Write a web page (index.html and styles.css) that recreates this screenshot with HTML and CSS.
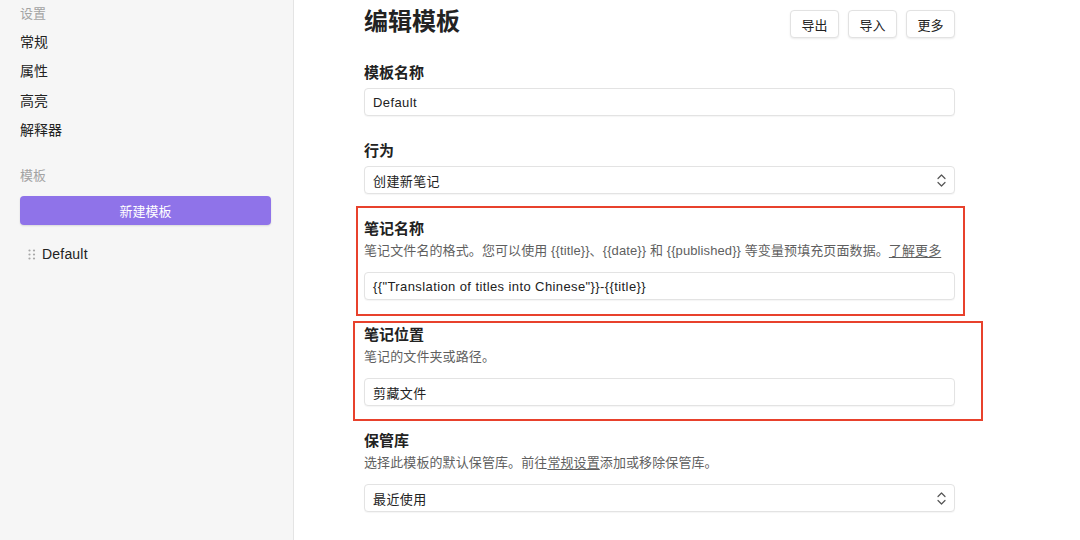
FILE: index.html
```html
<!DOCTYPE html>
<html lang="zh">
<head>
<meta charset="utf-8">
<title>编辑模板</title>
<link rel="stylesheet" href="styles.css">
</head>
<body>
<div class="app">
  <aside class="sidebar">
    <div class="side-head">设置</div>
    <ul class="side-list">
      <li>常规</li>
      <li>属性</li>
      <li>高亮</li>
      <li>解释器</li>
    </ul>
    <div class="side-head side-head-2">模板</div>
    <button class="new-btn">新建模板</button>
    <div class="tpl-item">
      <svg class="grip" width="8" height="11" viewBox="0 0 8 11"><g fill="#a8a8a8"><circle cx="1.5" cy="1.5" r="1.1"/><circle cx="6" cy="1.5" r="1.1"/><circle cx="1.5" cy="5.5" r="1.1"/><circle cx="6" cy="5.5" r="1.1"/><circle cx="1.5" cy="9.5" r="1.1"/><circle cx="6" cy="9.5" r="1.1"/></g></svg>
      <span>Default</span>
    </div>
  </aside>
  <main class="main">
    <div class="content">
      <header class="header">
        <h1 class="title">编辑模板</h1>
        <div class="actions">
          <button class="btn">导出</button>
          <button class="btn">导入</button>
          <button class="btn">更多</button>
        </div>
      </header>

      <section class="field first">
        <div class="label">模板名称</div>
        <div class="control">Default</div>
      </section>

      <section class="field">
        <div class="label">行为</div>
        <div class="control select">创建新笔记
          <svg class="chev" width="9" height="13" viewBox="0 0 9 13"><path d="M1 4.5 L4.5 1 L8 4.5 M1 8.5 L4.5 12 L8 8.5" fill="none" stroke="#555" stroke-width="1.2" stroke-linecap="round" stroke-linejoin="round"/></svg>
        </div>
      </section>

      <section class="field">
        <div class="label">笔记名称</div>
        <div class="desc">笔记文件名的格式。您可以使用 {{title}}、{{date}} 和 {{published}} 等变量预填充页面数据。<span class="link">了解更多</span></div>
        <div class="control with-desc">{{"Translation of titles into Chinese"}}-{{title}}</div>
      </section>

      <section class="field">
        <div class="label">笔记位置</div>
        <div class="desc">笔记的文件夹或路径。</div>
        <div class="control with-desc">剪藏文件</div>
      </section>

      <section class="field">
        <div class="label">保管库</div>
        <div class="desc">选择此模板的默认保管库。前往<span class="link">常规设置</span>添加或移除保管库。</div>
        <div class="control select with-desc">最近使用
          <svg class="chev" width="9" height="13" viewBox="0 0 9 13"><path d="M1 4.5 L4.5 1 L8 4.5 M1 8.5 L4.5 12 L8 8.5" fill="none" stroke="#555" stroke-width="1.2" stroke-linecap="round" stroke-linejoin="round"/></svg>
        </div>
      </section>
    </div>
  </main>
  <div class="mark mark-1"></div>
  <div class="mark mark-2"></div>
</div>
</body>
</html>
```

FILE: styles.css
```css
* { box-sizing: border-box; }
html, body { margin: 0; padding: 0; }
body {
  width: 1080px;
  height: 540px;
  overflow: hidden;
  background: #ffffff;
  color: #222222;
  font-family: "Liberation Sans", "Noto Sans CJK SC", sans-serif;
}
.app {
  position: relative;
  display: flex;
  height: 540px;
}
.sidebar {
  width: 294px;
  flex: none;
  background: #f6f6f6;
  border-right: 1px solid #e4e4e4;
  padding: 4px 22px 0 20px;
}
.side-head {
  font-size: 13px;
  line-height: 20px;
  color: #a3a3a3;
}
.side-head-2 { margin-top: 21px; }
.side-list {
  list-style: none;
  margin: 4px 0 0;
  padding: 0;
}
.side-list li {
  font-size: 14px;
  line-height: 29.3px;
  color: #222;
}
.new-btn {
  display: block;
  width: 251px;
  height: 29px;
  margin-top: 10px;
  border: none;
  border-radius: 4px;
  background: #8f73e9;
  color: #ffffff;
  font-family: inherit;
  font-size: 13px;
  box-shadow: 0 1px 2px rgba(0,0,0,0.12);
}
.tpl-item {
  display: flex;
  align-items: center;
  gap: 6px;
  margin-top: 19px;
  padding-left: 8px;
  font-size: 14px;
  line-height: 20px;
  color: #222;
  letter-spacing: 0.2px;
}
.grip { flex: none; }

.main {
  flex: 1;
  padding: 8px 0 0 70px;
}
.content { width: 591px; }
.header {
  display: flex;
  align-items: center;
  justify-content: space-between;
  height: 32px;
}
.title {
  margin: 0;
  font-size: 24px;
  font-weight: 700;
  line-height: 32px;
  color: #222;
  position: relative;
  top: -2px;
}
.actions { display: flex; gap: 9px; }
.btn {
  width: 49px;
  height: 28px;
  padding: 0;
  border: 1px solid #e2e2e2;
  border-radius: 4px;
  background: #ffffff;
  color: #222;
  font-family: inherit;
  font-size: 13px;
  box-shadow: 0 1px 2px rgba(0,0,0,0.08);
}
.field { margin-top: 25px; }
.field.first { margin-top: 23px; }
.label {
  font-size: 15px;
  font-weight: 700;
  line-height: 20px;
  color: #222;
}
.desc {
  margin-top: 3px;
  font-size: 13px;
  line-height: 18px;
  color: #5f5f5f;
  white-space: nowrap;
  letter-spacing: 0.1px;
}
.link { text-decoration: underline; text-underline-offset: 2px; }
.control {
  position: relative;
  margin-top: 5px;
  height: 28px;
  padding: 0 8px;
  display: flex;
  align-items: center;
  border: 1px solid #e3e3e3;
  border-radius: 4px;
  background: #ffffff;
  font-size: 13px;
  color: #222;
  letter-spacing: 0.4px;
  box-shadow: 0 1px 1px rgba(0,0,0,0.04);
}
.control.with-desc { margin-top: 12px; }
.chev {
  position: absolute;
  right: 8px;
  top: 7px;
}
.mark {
  position: absolute;
  border: 2.5px solid #e8412c;
  pointer-events: none;
}
.mark-1 { left: 356px; top: 206px; width: 609px; height: 110px; }
.mark-2 { left: 353px; top: 321px; width: 630px; height: 100px; }
```
